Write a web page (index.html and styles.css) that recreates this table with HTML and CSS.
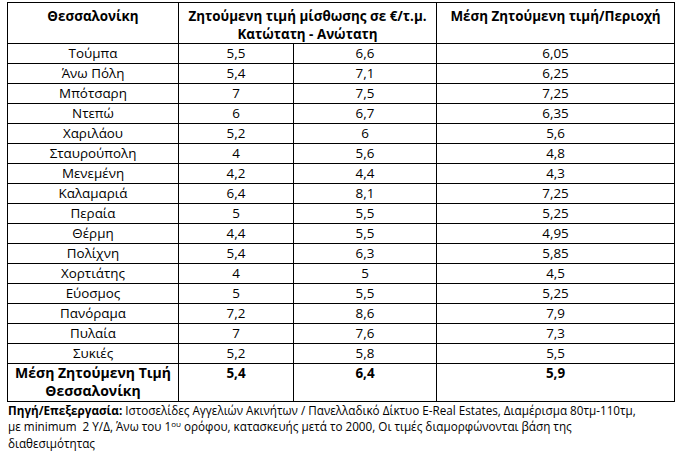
FILE: index.html
```html
<!DOCTYPE html>
<html lang="el">
<head>
<meta charset="utf-8">
<title>Θεσσαλονίκη - Ζητούμενες τιμές</title>
<link rel="stylesheet" href="styles.css">
</head>
<body>
<div class="page">
<table class="prices">
  <colgroup>
    <col class="c-area">
    <col class="c-min">
    <col class="c-max">
    <col class="c-avg">
  </colgroup>
  <thead>
    <tr class="head">
      <th>Θεσσαλονίκη</th>
      <th colspan="2">Ζητούμενη τιμή μίσθωσης σε €/τ.μ.<br>Κατώτατη - Ανώτατη</th>
      <th>Μέση Ζητούμενη τιμή/Περιοχή</th>
    </tr>
  </thead>
  <tbody>
    <tr><td>Τούμπα</td><td>5,5</td><td>6,6</td><td>6,05</td></tr>
    <tr><td>Άνω Πόλη</td><td>5,4</td><td>7,1</td><td>6,25</td></tr>
    <tr><td>Μπότσαρη</td><td>7</td><td>7,5</td><td>7,25</td></tr>
    <tr><td>Ντεπώ</td><td>6</td><td>6,7</td><td>6,35</td></tr>
    <tr><td>Χαριλάου</td><td>5,2</td><td>6</td><td>5,6</td></tr>
    <tr><td>Σταυρούπολη</td><td>4</td><td>5,6</td><td>4,8</td></tr>
    <tr><td>Μενεμένη</td><td>4,2</td><td>4,4</td><td>4,3</td></tr>
    <tr><td>Καλαμαριά</td><td>6,4</td><td>8,1</td><td>7,25</td></tr>
    <tr><td>Περαία</td><td>5</td><td>5,5</td><td>5,25</td></tr>
    <tr><td>Θέρμη</td><td>4,4</td><td>5,5</td><td>4,95</td></tr>
    <tr><td>Πολίχνη</td><td>5,4</td><td>6,3</td><td>5,85</td></tr>
    <tr><td>Χορτιάτης</td><td>4</td><td>5</td><td>4,5</td></tr>
    <tr><td>Εύοσμος</td><td>5</td><td>5,5</td><td>5,25</td></tr>
    <tr><td>Πανόραμα</td><td>7,2</td><td>8,6</td><td>7,9</td></tr>
    <tr><td>Πυλαία</td><td>7</td><td>7,6</td><td>7,3</td></tr>
    <tr><td>Συκιές</td><td>5,2</td><td>5,8</td><td>5,5</td></tr>
    <tr class="total">
      <th>Μέση Ζητούμενη Τιμή<br>Θεσσαλονίκη</th>
      <td>5,4</td><td>6,4</td><td>5,9</td>
    </tr>
  </tbody>
</table>
<p class="note"><b>Πηγή/Επεξεργασία:</b> Ιστοσελίδες Αγγελιών Ακινήτων / Πανελλαδικό Δίκτυο E-Real Estates, Διαμέρισμα 80τμ-110τμ,<br>με minimum &nbsp;2 Υ/Δ, Άνω του 1<sup>ου</sup> ορόφου, κατασκευής μετά το 2000, Οι τιμές διαμορφώνονται βάση της<br>διαθεσιμότητας</p>
</div>
</body>
</html>
```

FILE: styles.css
```css
html, body {
  margin: 0;
  padding: 0;
  background: #ffffff;
}

body {
  font-family: "Open Sans", "Noto Sans", sans-serif;
  color: #000000;
}

.page {
  padding: 2px 0 0 7px;
  width: 667px;
}

.prices {
  width: 667px;
  border-collapse: collapse;
  table-layout: fixed;
  font-size: 13.4px;
}

.c-area { width: 171px; }
.c-min { width: 115px; }
.c-max { width: 143px; }
.c-avg { width: 238px; }

.prices th,
.prices td {
  border: 1px solid #000000;
  text-align: center;
  padding: 0;
}

.prices td {
  height: 19px;
  line-height: 19px;
  vertical-align: middle;
}

.head th {
  height: 40px;
  vertical-align: top;
  font-weight: 700;
  line-height: 18px;
  padding-top: 4px;
  box-sizing: border-box;
}

.total th,
.total td {
  font-weight: 700;
  vertical-align: top;
  height: 37px;
}

.total th {
  line-height: 18px;
  font-size: 14px;
  padding-top: 0;
}

.total td {
  line-height: 18px;
  padding-top: 0;
}

.note {
  margin: 0;
  padding: 0 0 0 1px;
  font-size: 11.7px;
  line-height: 16.3px;
  white-space: nowrap;
}

.note sup {
  font-size: 8px;
  line-height: 0;
  vertical-align: 4px;
}
```
